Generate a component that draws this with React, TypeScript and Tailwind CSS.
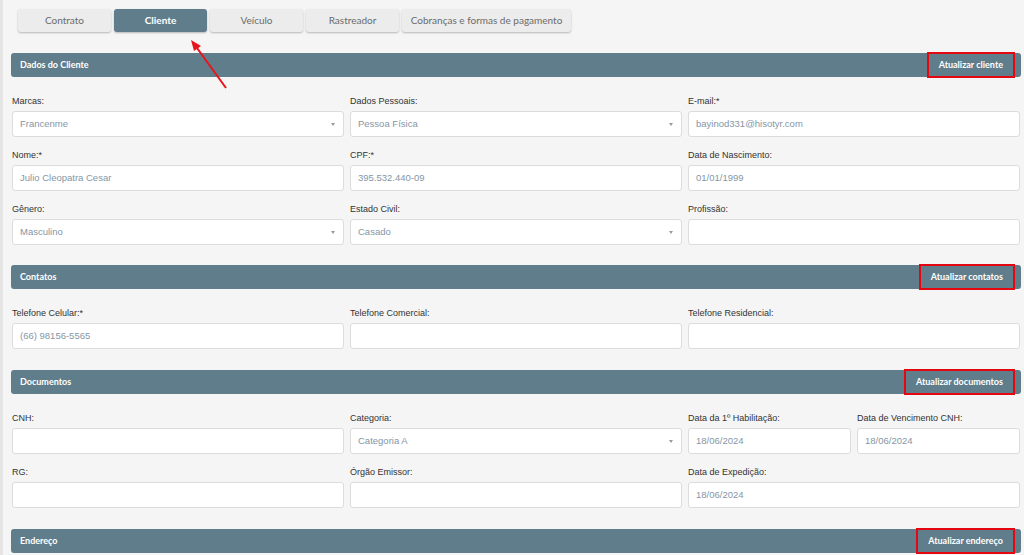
import React from 'react';

type Field = {
  label: string;
  value?: string;
  select?: boolean;
  span?: string;
};

const tabs = ['Contrato', 'Cliente', 'Veículo', 'Rastreador', 'Cobranças e formas de pagamento'];

const SectionHeader = ({ title, action }: { title: string; action: string }) => (
  <div className="flex h-[24px] items-center justify-between rounded-[3px] bg-[#607d8b] pl-[9px] pr-[6px] font-['Lato',sans-serif] text-[9px] font-bold text-white">
    <span>{title}</span>
    <button className="-my-[1px] h-[26px] border-2 border-[#e4070f] px-[10px] text-[9px] font-bold text-white">{action}</button>
  </div>
);

const Input = ({ label, value, select, span }: Field) => (
  <div className={span ?? 'col-span-2'}>
    <label className="block h-[12px] font-['Liberation_Sans',Arial,sans-serif] text-[9px] leading-[12px] text-[#333]">{label}</label>
    <div className="relative mt-[4px] flex h-[26px] items-center rounded-[3px] border border-[#dcdcdc] bg-white pl-[7px] font-['Liberation_Sans',Arial,sans-serif] text-[9.5px] text-[#8596a6]">
      {value}
      {select && (
        <span className="absolute right-[8px] top-[11px] h-0 w-0 border-x-[2px] border-t-[3px] border-x-transparent border-t-[#999]" />
      )}
    </div>
  </div>
);

const Section = ({ title, action, rows, last }: { title: string; action: string; rows: Field[]; last?: boolean }) => (
  <section>
    <SectionHeader title={title} action={action} />
    <div className={`grid grid-cols-6 gap-x-[6px] gap-y-[12px] px-[1px] pt-[18px] ${last ? 'pb-[21px]' : 'pb-[20px]'}`}>
      {rows.map((f, i) => (
        <Input key={i} {...f} />
      ))}
    </div>
  </section>
);

export default function App() {
  return (
    <div className="relative min-h-[555px] w-[1024px] overflow-hidden border-l-[3px] border-[#e4e4e4] bg-[#f5f5f5]">
      <div className="pl-[8px] pr-[3px] pt-[9px]">
        {/* Tabs */}
        <div className="ml-[7px] flex gap-[3px] font-['Lato',sans-serif] text-[10px]">
          {tabs.map(t => (
            <div
              key={t}
              className={`flex h-[23px] items-center justify-center rounded-[3px] shadow-[0_1px_2px_rgba(0,0,0,0.25)] ${
                t === 'Cliente' ? 'bg-[#607d8b] font-bold text-white' : 'bg-[#ececec] text-[#6b6b6b]'
              } ${t.startsWith('Cobran') ? 'w-[169px]' : 'w-[93px]'}`}
            >
              {t}
            </div>
          ))}
        </div>

        <div className="mt-[21px]">
          <Section
            title="Dados do Cliente"
            action="Atualizar cliente"
            rows={[
              { label: 'Marcas:', value: 'Francenme', select: true },
              { label: 'Dados Pessoais:', value: 'Pessoa Física', select: true },
              { label: 'E-mail:*', value: 'bayinod331@hisotyr.com' },
              { label: 'Nome:*', value: 'Julio Cleopatra Cesar' },
              { label: 'CPF:*', value: '395.532.440-09' },
              { label: 'Data de Nascimento:', value: '01/01/1999' },
              { label: 'Gênero:', value: 'Masculino', select: true },
              { label: 'Estado Civil:', value: 'Casado', select: true },
              { label: 'Profissão:' },
            ]}
          />
          <Section
            title="Contatos"
            action="Atualizar contatos"
            last
            rows={[
              { label: 'Telefone Celular:*', value: '(66) 98156-5565' },
              { label: 'Telefone Comercial:' },
              { label: 'Telefone Residencial:' },
            ]}
          />
          <Section
            title="Documentos"
            action="Atualizar documentos"
            last
            rows={[
              { label: 'CNH:' },
              { label: 'Categoria:', value: 'Categoria A', select: true },
              { label: 'Data da 1º Habilitação:', value: '18/06/2024', span: 'col-span-1' },
              { label: 'Data de Vencimento CNH:', value: '18/06/2024', span: 'col-span-1' },
              { label: 'RG:' },
              { label: 'Órgão Emissor:' },
              { label: 'Data de Expedição:', value: '18/06/2024' },
            ]}
          />
          <SectionHeader title="Endereço" action="Atualizar endereço" />
        </div>
      </div>

      {/* Annotation arrow */}
      <svg className="pointer-events-none absolute left-0 top-0" width="260" height="100" viewBox="0 0 260 100">
        <line x1="223" y1="88" x2="194" y2="48" stroke="#e8141b" strokeWidth="2" />
        <polygon points="188,40 198,46 191,51" fill="#e8141b" />
      </svg>
    </div>
  );
}
